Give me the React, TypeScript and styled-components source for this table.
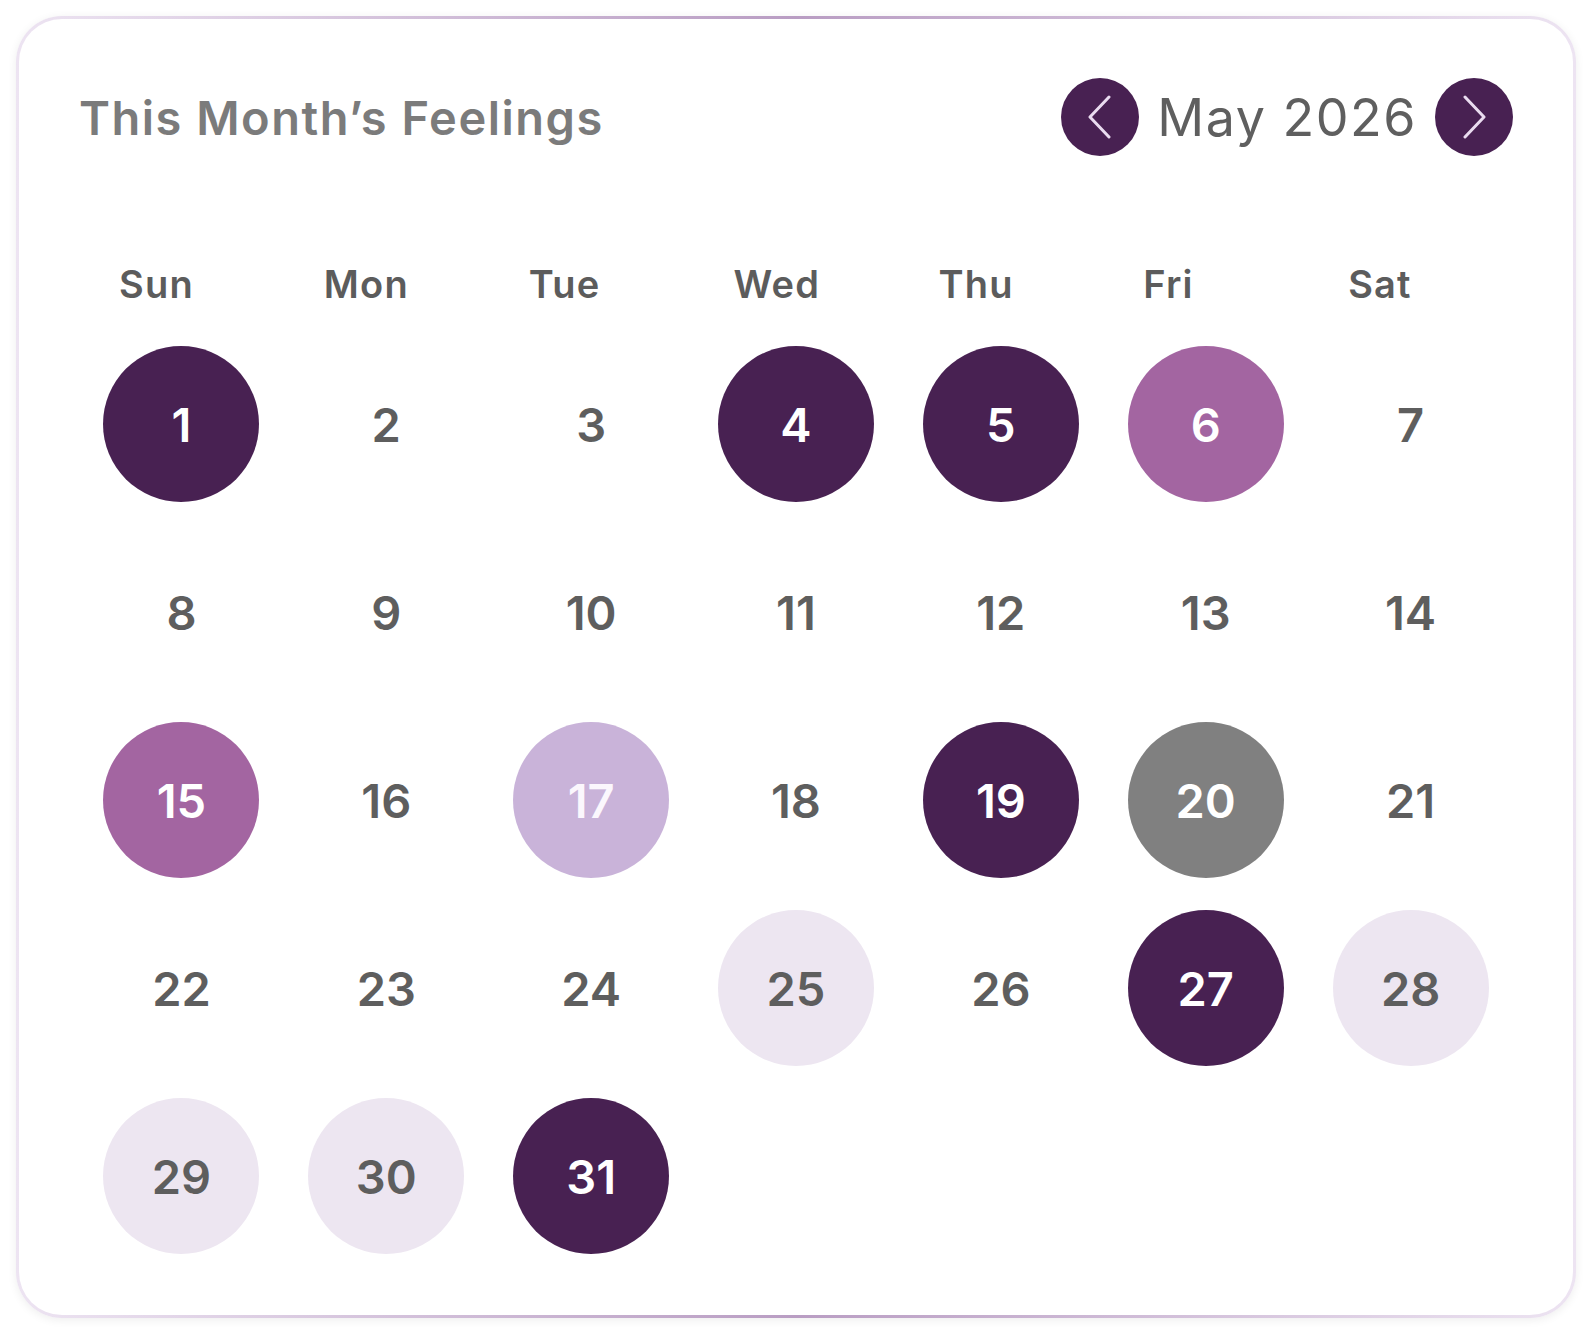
import React from 'react';
import styled, { createGlobalStyle } from 'styled-components';

const GlobalStyle = createGlobalStyle`
  body {
    margin: 0;
    background: #ffffff;
    font-family: Inter, 'Noto Sans', sans-serif;
  }
`;

type Mood = 'deep' | 'mid' | 'soft' | 'grey' | 'pale' | 'none';

const moodColors: Record<Mood, { bg: string; fg: string }> = {
  deep: { bg: '#482152', fg: '#ffffff' },
  mid: { bg: '#a365a1', fg: '#ffffff' },
  soft: { bg: '#c9b3d9', fg: '#fbf7fd' },
  grey: { bg: '#808080', fg: '#ffffff' },
  pale: { bg: '#ede6f1', fg: '#5e5e5e' },
  none: { bg: 'transparent', fg: '#5e5e5e' },
};

const Page = styled.div`
  padding: 16px;
`;

const Card = styled.section`
  border: 3px solid transparent;
  border-radius: 46px;
  background:
    linear-gradient(#ffffff, #ffffff) padding-box,
    linear-gradient(90deg, #ede4f2 0%, #b99dc3 50%, #ede4f2 100%) border-box;
  box-shadow: 0 2px 10px rgba(0, 0, 0, 0.07);
  padding: 59px 60px 61px;
`;

const Header = styled.header`
  display: flex;
  align-items: center;
  justify-content: space-between;
  height: 78px;
`;

const Title = styled.h2`
  margin: 0;
  font-size: 47px;
  font-weight: 600;
  letter-spacing: 1.5px;
  color: #7b7b7b;
`;

const MonthNav = styled.div`
  display: flex;
  align-items: center;
  gap: 18px;
`;

const NavButton = styled.button`
  width: 78px;
  height: 78px;
  border: none;
  border-radius: 50%;
  background: #482152;
  display: flex;
  align-items: center;
  justify-content: center;
  padding: 0;
  cursor: pointer;
`;

const MonthLabel = styled.span`
  font-size: 52px;
  font-weight: 400;
  letter-spacing: 1.5px;
  color: #5f5f5f;
`;

const WeekRow = styled.div`
  display: grid;
  grid-template-columns: repeat(7, 1fr);
  margin-top: 104px;
`;

const WeekDay = styled.div`
  padding-left: 40px;
  font-size: 38px;
  line-height: 48px;
  font-weight: 600;
  letter-spacing: 1.2px;
  color: #5c5c5c;
`;

const DaysGrid = styled.div`
  display: grid;
  grid-template-columns: repeat(7, 1fr);
  row-gap: 32px;
  margin-top: 38px;
`;

const Cell = styled.div`
  display: flex;
  justify-content: center;
`;

const Day = styled.div<{ $mood: Mood }>`
  width: 156px;
  height: 156px;
  border-radius: 50%;
  display: flex;
  align-items: center;
  justify-content: center;
  font-size: 47px;
  font-weight: 600;
  background: ${(p) => moodColors[p.$mood].bg};
  color: ${(p) => moodColors[p.$mood].fg};
`;

const Chevron = ({ dir }: { dir: 'left' | 'right' }) => (
  <svg width="26" height="44" viewBox="0 0 26 44" fill="none">
    <polyline
      points={dir === 'left' ? '22,2 3,22 22,42' : '4,2 23,22 4,42'}
      stroke="#eadcf0"
      strokeWidth="3"
      strokeLinecap="round"
      strokeLinejoin="round"
    />
  </svg>
);

const weekDays = ['Sun', 'Mon', 'Tue', 'Wed', 'Thu', 'Fri', 'Sat'];

const moods: Record<number, Mood> = {
  1: 'deep',
  4: 'deep',
  5: 'deep',
  6: 'mid',
  15: 'mid',
  17: 'soft',
  19: 'deep',
  20: 'grey',
  25: 'pale',
  27: 'deep',
  28: 'pale',
  29: 'pale',
  30: 'pale',
  31: 'deep',
};

export default function App() {
  const days = Array.from({ length: 31 }, (_, i) => i + 1);

  return (
    <Page>
      <GlobalStyle />
      <Card>
        <Header>
          <Title>This Month’s Feelings</Title>
          <MonthNav>
            <NavButton aria-label="Previous month">
              <Chevron dir="left" />
            </NavButton>
            <MonthLabel>May 2026</MonthLabel>
            <NavButton aria-label="Next month">
              <Chevron dir="right" />
            </NavButton>
          </MonthNav>
        </Header>

        <WeekRow>
          {weekDays.map((d) => (
            <WeekDay key={d}>{d}</WeekDay>
          ))}
        </WeekRow>

        <DaysGrid>
          {days.map((d) => (
            <Cell key={d}>
              <Day $mood={moods[d] ?? 'none'}>{d}</Day>
            </Cell>
          ))}
        </DaysGrid>
      </Card>
    </Page>
  );
}
